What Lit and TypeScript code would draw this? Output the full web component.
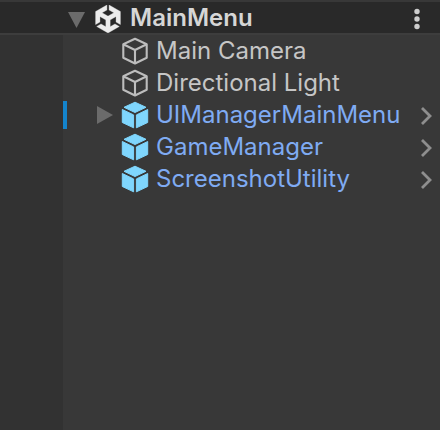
import { LitElement, html, css, svg } from "lit";
import { customElement, property } from "lit/decorators.js";

interface SceneItem {
  name: string;
  prefab?: boolean;
  expandable?: boolean;
  marked?: boolean;
}

const items: SceneItem[] = [
  { name: "Main Camera" },
  { name: "Directional Light" },
  { name: "UIManagerMainMenu", prefab: true, expandable: true, marked: true },
  { name: "GameManager", prefab: true },
  { name: "ScreenshotUtility", prefab: true },
];

const outlineCube = svg`
  <path d="M14 1.700 25.700 7.200V20.700L14 26.500 2.300 20.700V7.200Z M2.300 7.200 14 13 25.700 7.200 M14 13V26.500"
    fill="none" stroke="#bdbdbd" stroke-width="2.1" stroke-linejoin="round"/>`;

const solidCube = svg`
  <g fill="#7fd6fd" stroke="#7fd6fd" stroke-width="1" stroke-linejoin="round">
    <path d="M14 1.200 25 6.300 14 11.500 3 6.300Z"/>
    <path d="M1.300 8.500 12.600 13.900V26.800L1.300 21.500Z"/>
    <path d="M26.700 8.500 15.400 13.900V26.800L26.700 21.500Z"/>
  </g>`;

@customElement("hierarchy-row")
export class HierarchyRow extends LitElement {
  @property({ attribute: false }) item!: SceneItem;

  static styles = css`
    :host { display: flex; align-items: center; height: 32px; }
    .gutter { width: 63px; flex: none; }
    .mark { width: 4px; height: 28px; flex: none; }
    .mark.on { background: #1484cc; }
    .fold { width: 28px; height: 28px; margin-left: 26px; flex: none; }
    button { display: block; border: 0; padding: 0; background: none; cursor: pointer; }
    svg { display: block; }
    .icon { width: 28px; height: 28px; flex: none; }
    .name {
      flex: 1; min-width: 0; margin-left: 7px; white-space: nowrap;
      font-size: 24px; line-height: 30px; color: #c6c6c6;
    }
    .name.prefab { color: #7fabf3; }
    .open { width: 16px; height: 28px; margin-right: 6px; flex: none; }
  `;

  render() {
    const { name, prefab, expandable, marked } = this.item;
    return html`
      <span class="gutter"></span>
      <span class="mark ${marked ? "on" : ""}"></span>
      <span class="fold">${expandable
        ? html`<button aria-label="Expand ${name}">
            <svg width="28" height="28" viewBox="0 0 28 28"><path d="M4 5 20 14 4 23Z" fill="#6b6b6b"/></svg>
          </button>`
        : ""}</span>
      <svg class="icon" viewBox="0 0 28 28" aria-hidden="true">${prefab ? solidCube : outlineCube}</svg>
      <span class="name ${prefab ? "prefab" : ""}">${name}</span>
      ${prefab
        ? html`<button class="open" aria-label="Open ${name}">
            <svg width="16" height="28" viewBox="0 0 16 28">
              <path d="M4 7 12 15 4 23" fill="none" stroke="#8e8e8e" stroke-width="2.8"/>
            </svg>
          </button>`
        : ""}
    `;
  }
}

@customElement("app-root")
export class AppRoot extends LitElement {
  static styles = css`
    :host {
      display: flex; flex-direction: column; min-height: 100vh; overflow: hidden;
      font-family: Inter, "Liberation Sans", sans-serif; background: #383838;
    }
    header {
      display: flex; align-items: center; height: 31px; background: #292929;
      border-top: 2px solid #383838; border-bottom: 2px solid #3d3d3d;
      padding: 0 13px 0 64px;
    }
    button { display: block; border: 0; padding: 0; background: none; cursor: pointer; flex: none; }
    svg { display: block; }
    .logo { width: 28px; height: 28px; margin-left: 6px; padding-top: 2px; flex: none; }
    h1 {
      flex: 1; margin: 0 0 0 8px; padding-top: 1px; font-size: 24px; line-height: 30px;
      font-weight: 600; color: #d6d6d6;
    }
    main {
      flex: 1; background: linear-gradient(to right, #323232 63px, #383838 63px);
    }
    ul { margin: 0; padding: 0; list-style: none; }
  `;

  render() {
    return html`
      <header>
        <button aria-label="Collapse MainMenu">
          <svg width="24" height="31" viewBox="0 0 24 31"><path d="M4 10H21L12.500 26Z" fill="#6b6b6b"/></svg>
        </button>
        <svg class="logo" viewBox="0 0 24 24" aria-hidden="true">
          <path fill="#ececec" stroke="#ececec" stroke-width="0.3" d="m12.9288 4.2939 3.7997 2.1929c.1366.077.1415.2905 0 .3675l-4.515 2.6076a.4192.4192 0 0 1-.4246 0L7.274 6.8543c-.139-.0745-.1415-.293 0-.3675l3.7972-2.193V0L1.3758 5.5977V16.793l3.7177-2.1456v-4.3858c-.0025-.1565.1813-.2682.318-.1838l4.5148 2.6076a.4252.4252 0 0 1 .2136.3676v5.2127c.0025.1565-.1813.2682-.3179.1838l-3.7996-2.1929-3.7178 2.1457L12 24l9.6954-5.5977-3.7178-2.1457-3.7996 2.1929c-.1341.082-.3229-.0248-.3179-.1838V13.053c0-.1565.087-.2956.2136-.3676l4.5149-2.6076c.134-.082.3228.0224.3179.1838v4.3858l3.7177 2.1456V5.5977L12.9288 0Z"/>
        </svg>
        <h1>MainMenu</h1>
        <button aria-label="Scene options">
          <svg width="20" height="31" viewBox="0 0 20 31" fill="#cdcdcd">
            <circle cx="10" cy="9.500" r="2.700"/><circle cx="10" cy="17" r="2.700"/><circle cx="10" cy="24.500" r="2.700"/>
          </svg>
        </button>
      </header>
      <main>
        <ul>
          ${items.map((item) => html`<li><hierarchy-row .item=${item}></hierarchy-row></li>`)}
        </ul>
      </main>
    `;
  }
}
